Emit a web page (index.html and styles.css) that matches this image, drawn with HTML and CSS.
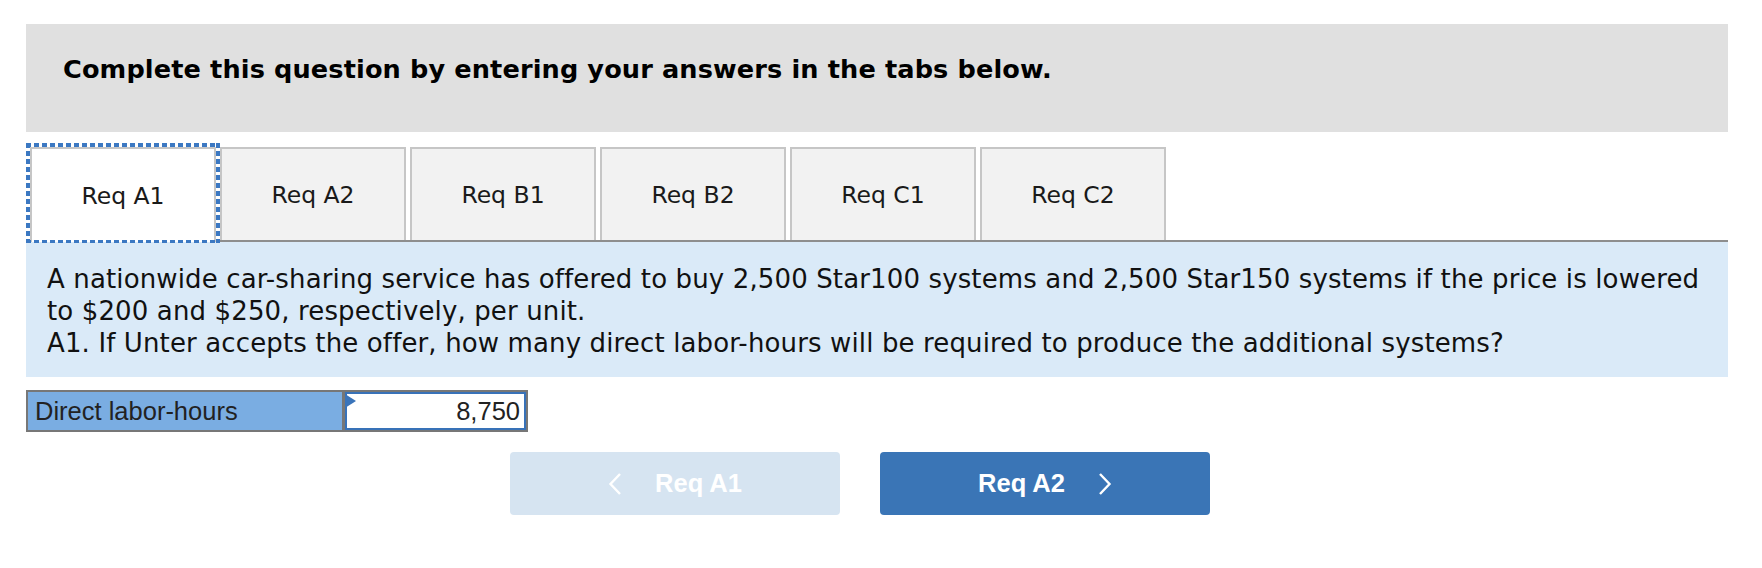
FILE: index.html
```html
<!DOCTYPE html>
<html lang="en">
<head>
<meta charset="utf-8">
<title>Complete this question</title>
<link rel="stylesheet" href="styles.css">
</head>
<body>
<div class="page">
  <div class="header">Complete this question by entering your answers in the tabs below.</div>

  <div class="tabs">
    <div class="tab active">Req A1</div>
    <div class="tab">Req A2</div>
    <div class="tab">Req B1</div>
    <div class="tab">Req B2</div>
    <div class="tab">Req C1</div>
    <div class="tab">Req C2</div>
  </div>

  <div class="prompt">
    <p>A nationwide car-sharing service has offered to buy 2,500 Star100 systems and 2,500 Star150 systems if the price is lowered to $200 and $250, respectively, per unit.</p>
    <p>A1. If Unter accepts the offer, how many direct labor-hours will be required to produce the additional systems?</p>
  </div>

  <div class="answer">
    <div class="answer-label">Direct labor-hours</div>
    <div class="answer-value">8,750</div>
  </div>

  <div class="nav">
    <button class="nav-btn prev" type="button">
      <svg class="chev" width="14" height="22" viewBox="0 0 14 22"><polyline points="12,1 2.5,11 12,21" fill="none" stroke="#ffffff" stroke-width="2.4"/></svg>
      <span>Req A1</span>
    </button>
    <button class="nav-btn next" type="button">
      <span>Req A2</span>
      <svg class="chev" width="14" height="22" viewBox="0 0 14 22"><polyline points="2,1 11.5,11 2,21" fill="none" stroke="#ffffff" stroke-width="2.4"/></svg>
    </button>
  </div>
</div>
</body>
</html>
```

FILE: styles.css
```css
html, body {
  margin: 0;
  padding: 0;
  background: #ffffff;
}

.page {
  padding: 24px 34px 0 26px;
  font-family: "DejaVu Sans", Verdana, sans-serif;
  color: #111111;
}

.header {
  background: #e0e0e0;
  height: 108px;
  box-sizing: border-box;
  padding: 30px 37px 0;
  font-weight: bold;
  font-size: 25.6px;
  line-height: 30px;
  letter-spacing: 0.12px;
  color: #000000;
}

.tabs {
  display: flex;
  margin-top: 15px;
  padding-left: 4px;
  height: 93px;
  border-bottom: 2px solid #8e8e8e;
}

.tab {
  width: 186px;
  box-sizing: border-box;
  margin-right: 4px;
  border: 2px solid #c6c6c6;
  border-bottom: none;
  background: #f2f2f2;
  display: flex;
  align-items: center;
  justify-content: center;
  font-size: 23.5px;
  color: #1a1a1a;
}

.tab.active {
  position: relative;
  background: #ffffff;
  height: 95px;
  margin-bottom: -2px;
}

.tab.active::after {
  content: "";
  position: absolute;
  left: -6px;
  right: -6px;
  top: -6px;
  bottom: -1px;
  background:
    repeating-linear-gradient(90deg, #3b78c2 0 5px, transparent 5px 8px) left top / 100% 4px no-repeat,
    repeating-linear-gradient(90deg, #3b78c2 0 5px, transparent 5px 8px) left bottom / 100% 3px no-repeat,
    repeating-linear-gradient(180deg, #3b78c2 0 5px, transparent 5px 8px) left top / 4px 100% no-repeat,
    repeating-linear-gradient(180deg, #3b78c2 0 5px, transparent 5px 8px) right top / 4px 100% no-repeat;
  pointer-events: none;
}

.prompt {
  background: #daeaf8;
  padding: 21px 12px 18px 21px;
  font-size: 26px;
  line-height: 32px;
  letter-spacing: 0.13px;
  color: #111111;
}

.prompt p {
  margin: 0;
}

.answer {
  display: flex;
  width: 502px;
  height: 42px;
  box-sizing: border-box;
  margin-top: 13px;
  border: 2px solid #777777;
  font-family: "Liberation Sans", Arial, sans-serif;
  font-size: 25.5px;
  line-height: 38px;
  color: #222222;
}

.answer-label {
  width: 317px;
  padding-left: 7px;
  box-sizing: border-box;
  background: #7aade2;
  border-right: 3px solid #777777;
}

.answer-value {
  position: relative;
  flex: 1;
  box-sizing: border-box;
  border: 2px solid #3872b8;
  background: #ffffff;
  text-align: right;
  padding-right: 4px;
  line-height: 34px;
}

.answer-value::before {
  content: "";
  position: absolute;
  left: -2px;
  top: 0;
  width: 0;
  height: 0;
  border-left: 11px solid #3a74ba;
  border-top: 7px solid transparent;
  border-bottom: 7px solid transparent;
}

.nav {
  display: flex;
  gap: 40px;
  margin-top: 20px;
  padding-left: 484px;
}

.nav-btn {
  width: 330px;
  height: 63px;
  border: none;
  border-radius: 4px;
  display: flex;
  align-items: center;
  justify-content: center;
  gap: 33px;
  padding: 0;
  font-family: "Liberation Sans", Arial, sans-serif;
  font-weight: bold;
  font-size: 25.5px;
  color: #ffffff;
  cursor: pointer;
}

.nav-btn.prev {
  background: #d6e4f1;
}

.nav-btn.next {
  background: #3a75b6;
}

.chev {
  display: block;
}
```
